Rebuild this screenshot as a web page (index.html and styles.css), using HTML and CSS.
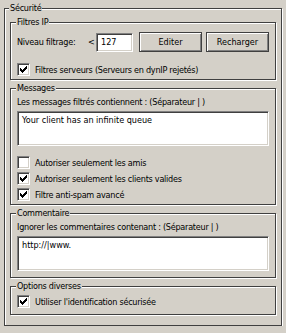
FILE: index.html
```html
<!DOCTYPE html>
<html lang="fr">
<head>
  <meta charset="UTF-8">
  <title>Sécurité</title>
  <link rel="stylesheet" href="styles.css">
</head>
<body>
  <fieldset class="group outer">
    <legend>Sécurité</legend>
    <div class="stack">

      <fieldset class="group ip">
        <legend>Filtres IP</legend>
        <div class="filter-row">
          <span class="filter-label">Niveau filtrage:</span>
          <span class="lt">&lt;</span>
          <input class="field level" type="text" value="127">
          <button class="btn">Editer</button>
          <button class="btn">Recharger</button>
        </div>
        <label class="check-row">
          <span class="box"><svg viewBox="0 0 9 9" width="9" height="9"><path d="M1 3h1v3h-1zM2 4h1v3h-1zM3 5h1v3h-1zM4 4h1v3h-1zM5 3h1v3h-1zM6 2h1v3h-1zM7 1h1v3h-1z"/></svg></span>
          Filtres serveurs (Serveurs en dynIP rejetés)
        </label>
      </fieldset>

      <fieldset class="group messages">
        <legend>Messages</legend>
        <div class="hint">Les messages filtrés contiennent : (Séparateur | )</div>
        <textarea class="field area">Your client has an infinite queue</textarea>
        <div class="checks">
          <label class="check-row">
            <span class="box"></span>
            Autoriser seulement les amis
          </label>
          <label class="check-row">
            <span class="box"><svg viewBox="0 0 9 9" width="9" height="9"><path d="M1 3h1v3h-1zM2 4h1v3h-1zM3 5h1v3h-1zM4 4h1v3h-1zM5 3h1v3h-1zM6 2h1v3h-1zM7 1h1v3h-1z"/></svg></span>
            Autoriser seulement les clients valides
          </label>
          <label class="check-row">
            <span class="box"><svg viewBox="0 0 9 9" width="9" height="9"><path d="M1 3h1v3h-1zM2 4h1v3h-1zM3 5h1v3h-1zM4 4h1v3h-1zM5 3h1v3h-1zM6 2h1v3h-1zM7 1h1v3h-1z"/></svg></span>
            Filtre anti-spam avancé
          </label>
        </div>
      </fieldset>

      <fieldset class="group comments">
        <legend>Commentaire</legend>
        <div class="hint">Ignorer les commentaires contenant : (Séparateur | )</div>
        <textarea class="field area">http://|www.</textarea>
      </fieldset>

      <fieldset class="group misc">
        <legend>Options diverses</legend>
        <label class="check-row">
          <span class="box"><svg viewBox="0 0 9 9" width="9" height="9"><path d="M1 3h1v3h-1zM2 4h1v3h-1zM3 5h1v3h-1zM4 4h1v3h-1zM5 3h1v3h-1zM6 2h1v3h-1zM7 1h1v3h-1z"/></svg></span>
          Utiliser l'identification sécurisée
        </label>
      </fieldset>

    </div>
  </fieldset>
</body>
</html>
```

FILE: styles.css
```css
* {
  box-sizing: border-box;
}

body {
  margin: 0;
  background: #d4d0c8;
  font-family: 'DejaVu Sans Condensed', 'DejaVu Sans', Tahoma, sans-serif;
  font-stretch: condensed;
  font-size: 9px;
  letter-spacing: -0.25px;
  color: #000;
}

/* etched group boxes */
.group {
  margin: 0;
  padding: 2px 6px 3px;
  border: 1px solid #404040;
  box-shadow: 1px 1px 0 #fff, inset 1px 1px 0 #fff;
  min-width: 0;
}

.group legend {
  padding: 0 1px;
  margin-left: -1px;
  line-height: 12px;
  background: #d4d0c8;
}

.outer {
  margin: 2px 4px 0;
  padding: 2px 5px 10px;
}

.stack {
  display: flex;
  flex-direction: column;
  gap: 2px;
}

.ip {
  padding-top: 3px;
}

.comments {
  padding-bottom: 6px;
}

.misc {
  padding-top: 3px;
  padding-bottom: 6px;
}

.filter-row {
  display: flex;
  align-items: center;
  height: 20px;
  margin-top: 1px;
  margin-bottom: 11px;
}

.filter-label {
  width: 71px;
}

.lt {
  width: 8px;
}

.field {
  font: inherit;
  color: #000;
  background: #fff;
  border: 1px solid;
  border-color: #808080 #fff #fff #808080;
  box-shadow: inset 1px 1px 0 #404040, inset -1px -1px 0 #d4d0c8;
  outline: none;
  margin: 0;
}

.level {
  width: 37px;
  height: 19px;
  padding: 0 4px;
}

.btn {
  font: inherit;
  color: #000;
  width: 63px;
  height: 20px;
  margin-left: 6px;
  padding: 0;
  background: #d4d0c8;
  border: 1px solid #404040;
  box-shadow: inset 1px 1px 0 #fff, inset -1px -1px 0 #808080;
}

.btn + .btn {
  margin-left: 4px;
}

.check-row {
  display: flex;
  align-items: center;
  gap: 5px;
  height: 13px;
}

.box {
  width: 13px;
  height: 13px;
  flex: none;
  display: flex;
  align-items: center;
  justify-content: center;
  background: #fff;
  border: 1px solid;
  border-color: #808080 #fff #fff #808080;
  box-shadow: inset 1px 1px 0 #404040, inset -1px -1px 0 #d4d0c8;
}

.box svg {
  display: block;
  shape-rendering: crispEdges;
}

.hint {
  line-height: 13px;
}

.area {
  display: block;
  width: 252px;
  height: 35px;
  margin-top: 2px;
  padding: 2px 4px;
  resize: none;
  overflow: hidden;
  line-height: 13px;
}

.checks {
  display: flex;
  flex-direction: column;
  gap: 3px;
  margin-top: 10px;
}
```
